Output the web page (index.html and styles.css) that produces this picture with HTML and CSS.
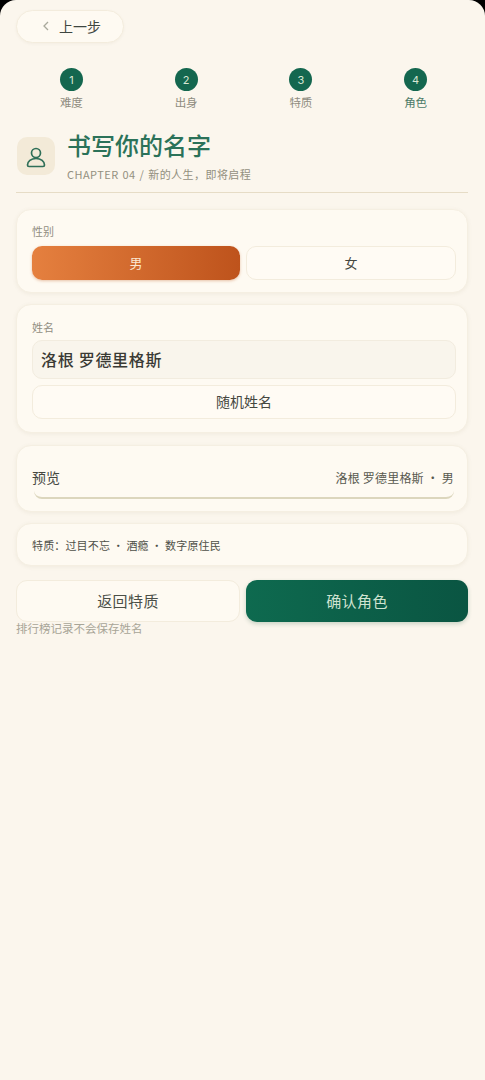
FILE: index.html
```html
<!DOCTYPE html>
<html lang="zh-CN">
<head>
<meta charset="utf-8">
<title>书写你的名字</title>
<link rel="stylesheet" href="styles.css">
</head>
<body>
<main class="screen">
  <button class="back"><svg class="chev" viewBox="0 0 10 12"><path d="M7 2 3 6 7 10"/></svg><span>上一步</span></button>
  <ol class="steps">
    <li class="step"><span class="dot">1</span><span class="step-label">难度</span></li>
    <li class="step"><span class="dot">2</span><span class="step-label">出身</span></li>
    <li class="step"><span class="dot">3</span><span class="step-label">特质</span></li>
    <li class="step current"><span class="dot">4</span><span class="step-label">角色</span></li>
  </ol>
  <header class="head">
    <div class="head-icon"><svg viewBox="0 0 24 24"><circle cx="12" cy="9" r="4.500"/><path d="M5 22.500h14a1.500 1.500 0 0 0 1.500-1.500c0-3.500-3.500-6.500-8.500-6.500s-8.500 3-8.500 6.500a1.500 1.500 0 0 0 1.500 1.500z"/></svg></div>
    <div class="head-text">
      <h1>书写你的名字</h1>
      <p>CHAPTER 04 / 新的人生，即将启程</p>
    </div>
  </header>
  <section class="card gender">
    <div class="label">性别</div>
    <div class="pair">
      <button class="opt active">男</button>
      <button class="opt">女</button>
    </div>
  </section>
  <section class="card name">
    <div class="label">姓名</div>
    <div class="input">洛根 罗德里格斯</div>
    <button class="random">随机姓名</button>
  </section>
  <section class="card preview">
    <div class="preview-row"><span class="preview-title">预览</span><span class="preview-value">洛根 罗德里格斯 · 男</span></div>
    <div class="preview-rule"></div>
  </section>
  <section class="card traits">特质：过目不忘 · 酒瘾 · 数字原住民</section>
  <div class="actions">
    <button class="action secondary">返回特质</button>
    <button class="action primary">确认角色</button>
  </div>
  <p class="note">排行榜记录不会保存姓名</p>
</main>
</body>
</html>
```
FILE: styles.css
```css
* { box-sizing: border-box; }
html, body { margin: 0; padding: 0; background: #000; }
body { font-family: "Noto Sans CJK SC", "Noto Sans", sans-serif; }
button { font-family: inherit; padding: 0 0 2px; cursor: pointer; }
.screen {
  width: 485px; height: 1080px; overflow: hidden;
  background: #fbf6ed; border-radius: 16px 16px 0 0;
  padding: 10px 17px 0 16px;
  display: flex; flex-direction: column;
}
.back {
  width: 108px; height: 33px; flex: none;
  display: flex; align-items: center; gap: 8px; padding-left: 24px;
  background: #fefaf2; border: 1px solid #f3ecdd; border-radius: 17px;
  color: #3f4640; font-size: 14px; box-shadow: 0 1px 3px rgba(120,100,60,.06);
}
.chev { width: 10px; height: 12px; fill: none; stroke: #a9a99b; stroke-width: 1.300; }
.steps {
  list-style: none; margin: 25px 0 0 -2px; padding: 0;
  display: grid; grid-template-columns: repeat(4, 1fr); justify-items: center;
  width: 459px;
}
.step { display: flex; flex-direction: column; align-items: center; gap: 3px; }
.dot {
  width: 23px; height: 23px; border-radius: 50%;
  background: #14674f; color: #d8e6d4; font-family: "Inter", sans-serif; font-size: 11px;
  display: flex; align-items: center; justify-content: center;
}
.step-label { font-size: 11.500px; line-height: 16px; color: #8f8c80; }
.current .step-label { color: #4b7a67; }
.head {
  margin-top: 19px; height: 64px; flex: none;
  display: flex; gap: 12px; border-bottom: 1px solid #e6dcc6;
  width: 452px;
}
.head-icon {
  width: 38px; height: 38px; margin: 8px 0 0 1px; border-radius: 10px;
  background: #f3ead8; display: flex; align-items: center; justify-content: center;
}
.head-icon svg { width: 24px; height: 24px; fill: none; stroke: #2f6f58; stroke-width: 1.700; stroke-linejoin: round; }
.head-text { margin-top: 1px; }
h1 { margin: 0; font-size: 24px; line-height: 30px; font-weight: 500; color: #2b7259; }
.head-text p { margin: 7px 0 0; font-size: 11px; line-height: 14px; color: #93907f; letter-spacing: 0.450px; word-spacing: 1px; }
.card {
  width: 452px; background: #fefaf2; border: 1px solid #f5efe2; border-radius: 15px;
  box-shadow: 0 1px 4px rgba(120,100,60,.08);
  padding: 0 11px 0 15px;
  flex: none;
}
.gender { margin-top: 16px; height: 84px; padding-top: 13px; }
.label { font-size: 11px; line-height: 16px; color: #918e82; }
.pair { display: flex; gap: 6px; margin-top: 7px; }
.opt {
  flex: 1; height: 34px; border-radius: 10px; border: 1px solid #f3ecdd;
  background: #fffbf4; color: #45473f; font-size: 13px;
}
.opt.active {
  border: none; color: #fbe6d0;
  background: linear-gradient(90deg, #e5803f, #be531c);
  box-shadow: 0 1px 3px rgba(190,90,30,.35);
}
.name { margin-top: 11px; height: 129px; padding-top: 14px; }
.input {
  height: 39px; margin-top: 5px; padding: 0 0 2px 8px;
  display: flex; align-items: center;
  background: #f9f5ec; border: 1px solid #f2ecdf; border-radius: 10px;
  color: #3a3a34; font-size: 16px; font-weight: 500; letter-spacing: 0.700px;
}
.random {
  display: block; width: 100%; height: 34px; margin-top: 6px;
  background: #fffbf4; border: 1px solid #f3ecdd; border-radius: 10px;
  color: #45473f; font-size: 14px; font-weight: 400;
}
.preview { margin-top: 12px; height: 67px; padding-top: 19px; }
.preview-row { display: flex; justify-content: space-between; align-items: center; height: 24px; }
.preview-title { font-size: 14px; color: #45473f; font-weight: 400; }
.preview-value { font-size: 12px; color: #58594f; padding-right: 2px; letter-spacing: 0.200px; }
.preview-rule {
  height: 10px; margin: 0 2px; border-bottom: 2px solid #dcd6bd; border-radius: 0 0 8px 8px;
}
.traits {
  margin-top: 11px; height: 43px; display: flex; align-items: center;
  font-size: 11px; color: #4f5048; font-weight: 400; letter-spacing: 0.150px;
}
.actions { display: flex; gap: 6px; margin-top: 14px; width: 452px; }
.action { flex: 1; height: 42px; border-radius: 11px; font-size: 15px; letter-spacing: 0.400px; }
.secondary {
  background: #fefaf2; border: 1px solid #f3ecdd; color: #4b4f47;
}
.primary {
  border: none; color: #cfe3d1;
  background: linear-gradient(90deg, #0e6a4f, #0a5542);
  box-shadow: 0 2px 4px rgba(30,90,60,.22);
}
.note { margin: 0; font-size: 11.500px; line-height: 13px; color: #a8a597; }
```
